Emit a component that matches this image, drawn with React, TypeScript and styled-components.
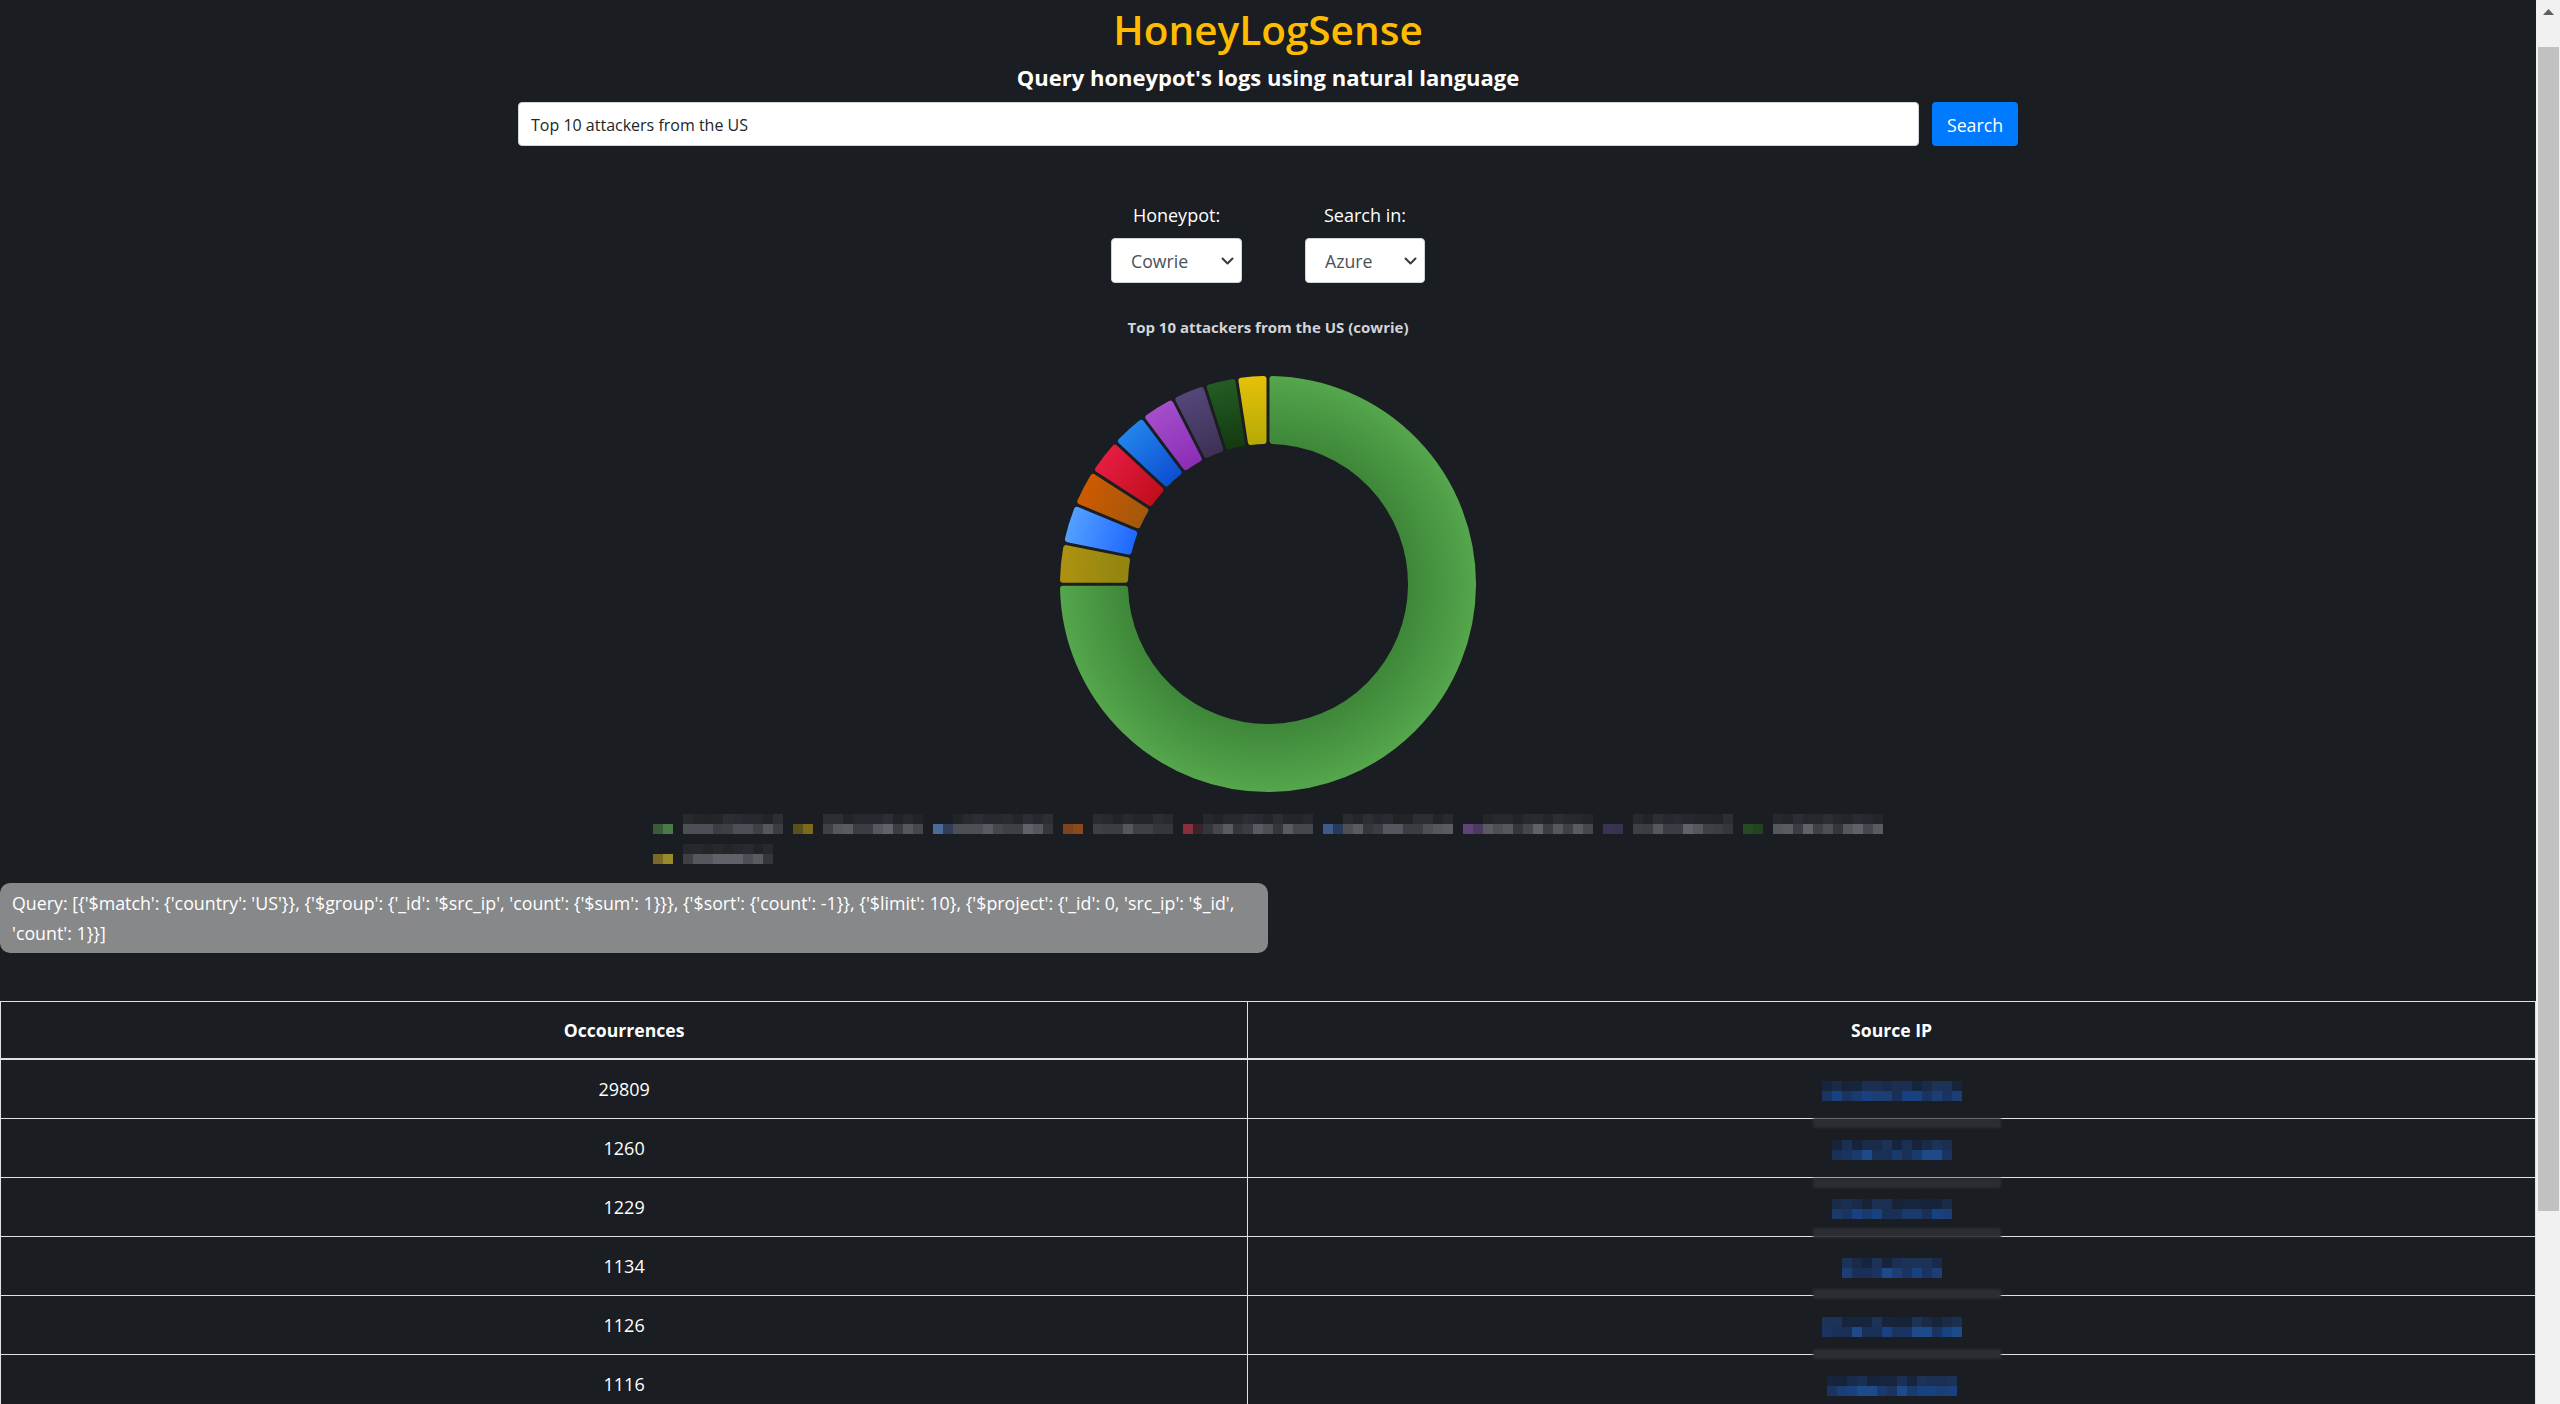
import React from 'react';
import styled, { createGlobalStyle } from 'styled-components';

const GlobalStyle = createGlobalStyle`
  html, body { background: #1a1d21; }
  html { scrollbar-width: none; }
  ::-webkit-scrollbar { display: none; }
  body {
    margin: 0;
    font-family: "Open Sans", "Noto Sans", sans-serif;
    color: #fff;
  }
`;

/* ---------- shell & window scrollbar ---------- */

const Shell = styled.div`
  display: flex;
  align-items: flex-start;
`;

const Page = styled.main`
  flex: 1;
  min-width: 0;
`;

const ScrollRail = styled.div`
  position: sticky;
  top: 0;
  flex: 0 0 24px;
  height: 100vh;
  display: flex;
  flex-direction: column;
  background: #f1f1f1;
`;

const RailArrow = styled.div`
  height: 24px;
  display: flex;
  align-items: center;
  justify-content: center;
`;

const RailThumb = styled.div`
  margin: 23px 1px 0 2px;
  height: 1164px;
  background: #c1c1c1;
`;

/* ---------- header & search ---------- */

const Header = styled.header`
  text-align: center;
  padding-top: 5px;
`;

const Title = styled.h1`
  margin: 0;
  font-size: 40.5px;
  line-height: 50px;
  font-weight: 600;
  color: #ffbb00;
`;

const Subtitle = styled.h2`
  margin: 9px 0 0;
  font-size: 22px;
  line-height: 26px;
  font-weight: 700;
  color: #fff;
`;

const SearchForm = styled.form`
  display: flex;
  gap: 13px;
  width: 1500px;
  margin: 12px auto 0;
`;

const QueryInput = styled.input`
  flex: 1;
  height: 44px;
  box-sizing: border-box;
  border: 1px solid #ced4da;
  border-radius: 4px;
  padding: 2px 12px 0;
  font: 16px "Open Sans", sans-serif;
  color: #212529;
  background: #fff;
  outline: none;
`;

const SearchButton = styled.button`
  width: 86px;
  height: 44px;
  border: none;
  border-radius: 4px;
  padding: 2px 0 0;
  background: #007bff;
  color: #fff;
  font: 17.7px "Open Sans", sans-serif;
  cursor: pointer;
`;

/* ---------- filters ---------- */

const Filters = styled.div`
  display: flex;
  justify-content: center;
  gap: 63px;
  margin-top: 57px;
`;

const Field = styled.div`
  display: flex;
  flex-direction: column;
  align-items: center;
  gap: 11px;
`;

const FieldLabel = styled.label`
  font-size: 18px;
  line-height: 24px;
  color: #fff;
`;

const SelectBox = styled.div<{ $w: number }>`
  position: relative;
  width: ${p => p.$w}px;
  height: 45px;
`;

const Select = styled.select`
  appearance: none;
  width: 100%;
  height: 100%;
  box-sizing: border-box;
  border: 1px solid #ced4da;
  border-radius: 4px;
  background: #fff;
  padding: 1px 0 0 19px;
  font: 17.7px "Open Sans", sans-serif;
  color: #495057;
  outline: none;
`;

const Chevron = styled.svg`
  position: absolute;
  right: 8px;
  top: 50%;
  width: 13px;
  height: 8px;
  margin-top: -4px;
  pointer-events: none;
`;

/* ---------- chart ---------- */

const ChartSection = styled.section`
  display: flex;
  flex-direction: column;
  align-items: center;
`;

const ChartTitle = styled.h3`
  margin: 34px 0 0;
  font-size: 15px;
  line-height: 20px;
  font-weight: 700;
  color: #d3d4d9;
`;

const Donut = styled.svg`
  display: block;
  margin-top: 26.5px;
  width: 440px;
  height: 440px;
`;

const Legend = styled.ul`
  list-style: none;
  margin: 10.5px 0 0;
  padding: 0;
  width: 1230px;
  display: flex;
  flex-wrap: wrap;
  gap: 10px;
`;

const LegendItem = styled.li<{ $gap: number }>`
  display: flex;
  align-items: flex-end;
  gap: ${p => p.$gap}px;
`;

const Mosaic = styled.span<{ $cols: number }>`
  display: grid;
  grid-template-columns: repeat(${p => p.$cols}, 10px);
  grid-auto-rows: 10px;
`;

const IpMosaic = styled(Mosaic)`
  display: inline-grid;
  vertical-align: middle;
`;

const Tile = styled.span<{ $c: string }>`
  background: ${p => p.$c};
`;

/* ---------- query ---------- */

const QueryBox = styled.div`
  width: 50%;
  box-sizing: border-box;
  margin-top: 19px;
  padding: 5px 12px;
  background: #87888a;
  border-radius: 10px;
  font-size: 17.8px;
  line-height: 30px;
  color: #fff;
`;

/* ---------- table ---------- */

const ResultTable = styled.table`
  width: 100%;
  border-collapse: collapse;
  margin-top: 48px;
  color: #fff;
`;

const Col = styled.col<{ $w: string }>`
  width: ${p => p.$w};
`;

const Th = styled.th`
  border: 1px solid #dee2e6;
  border-bottom-width: 2px;
  padding: 14px 15px;
  line-height: 28px;
  font-size: 17.6px;
  font-weight: 700;
  text-align: center;
`;

const Td = styled.td`
  position: relative;
  border: 1px solid #dee2e6;
  padding: 15px;
  line-height: 28px;
  font-size: 18px;
  text-align: center;
`;

const RedactBar = styled.span<{ $top: number }>`
  position: absolute;
  z-index: 2;
  top: ${p => p.$top}px;
  left: calc(50% - 79px);
  width: 188px;
  height: 10px;
  background: #2b2d31;
  filter: blur(1px);
`;

/* ---------- data ---------- */

const rnd = (n: number) => {
  const x = Math.sin(n * 127.1 + 311.7) * 43758.5453;
  return x - Math.floor(x);
};

const mosaic = (seed: number, cols: number, top: string[], bottom: string[]) => {
  const out: string[] = [];
  for (let i = 0; i < cols; i++) out.push(top[Math.floor(rnd(seed * 100 + i) * top.length)]);
  for (let i = 0; i < cols; i++) out.push(bottom[Math.floor(rnd(seed * 100 + 50 + i) * bottom.length)]);
  return out;
};

const GRAY_TOP = ['#232529', '#26282d', '#292b30', '#2c2e33', '#212327', '#27292e'];
const GRAY_BOTTOM = ['#3b3d45', '#45474e', '#4d4e56', '#56575e', '#606169', '#3f4046', '#34363c', '#5a5a62'];
const BLUE_TOP = ['#172339', '#1a2b4a', '#1c3357', '#16243e', '#1b2f52'];
const BLUE_BOTTOM = ['#1a3361', '#1d3d75', '#17417f', '#1a2f56', '#1e4a8a', '#1b3a6c'];

const rows = [29809, 1260, 1229, 1134, 1126, 1116, 1080, 1040, 1000, 960];

const segments = [
  { inner: '#3e8739', outer: '#55a64c' },
  { inner: '#918410', outer: '#ad9210' },
  { inner: '#1f68ff', outer: '#53a0ff' },
  { inner: '#a3580c', outer: '#cc5a00' },
  { inner: '#c00e1c', outer: '#e61c42' },
  { inner: '#0c4fd2', outer: '#2384ea' },
  { inner: '#8c2db6', outer: '#a44ecb' },
  { inner: '#3d3155', outer: '#544679' },
  { inner: '#143a10', outer: '#245c24' },
  { inner: '#b6aa05', outer: '#e4c10a' },
];

const legendItems = [
  { box: ['#3b5a3a', '#4a7a47'], gap: 10, cols: 10 },
  { box: ['#5b4f1c', '#7b6a1a'], gap: 10, cols: 10 },
  { box: ['#4b6a99', '#2f3d58'], gap: 0, cols: 10 },
  { box: ['#7d431a', '#8a4a1c'], gap: 10, cols: 8 },
  { box: ['#8a2f3a', '#3a2329'], gap: 0, cols: 11 },
  { box: ['#3d5a8a', '#283a5a'], gap: 0, cols: 11 },
  { box: ['#5e4479', '#4a3a60'], gap: 0, cols: 11 },
  { box: ['#3a3353', '#383150'], gap: 10, cols: 10 },
  { box: ['#264a24', '#23421f'], gap: 10, cols: 11 },
  { box: ['#7a6a24', '#9a8a2a'], gap: 10, cols: 9 },
];

const ipCols = [14, 12, 12, 10, 14, 13, 12, 13, 12, 14];
const barTops = [58, 59, 50, 52, 53, 54, 52, 55, 53, 40];

const CX = 220;
const CY = 220;
const R_OUT = 208;
const R_IN = 140;
const CORNER = 3;
const GAP = 3;

function sectorPath(a0: number, a1: number) {
  const ro = R_OUT - CORNER;
  const ri = R_IN + CORNER;
  const d = GAP / 2 + CORNER;
  const pt = (r: number, a: number) => `${(CX + r * Math.sin(a)).toFixed(3)} ${(CY - r * Math.cos(a)).toFixed(3)}`;
  const oa0 = a0 + Math.asin(d / ro);
  const oa1 = a1 - Math.asin(d / ro);
  const ia0 = a0 + Math.asin(d / ri);
  const ia1 = a1 - Math.asin(d / ri);
  const lo = oa1 - oa0 > Math.PI ? 1 : 0;
  const li = ia1 - ia0 > Math.PI ? 1 : 0;
  return `M${pt(ro, oa0)} A${ro} ${ro} 0 ${lo} 1 ${pt(ro, oa1)} L${pt(ri, ia1)} A${ri} ${ri} 0 ${li} 0 ${pt(ri, ia0)} Z`;
}

function DonutChart() {
  const total = rows.reduce((a, b) => a + b, 0);
  let acc = 0;
  const arcs = rows.map((v, i) => {
    const a0 = (acc / total) * Math.PI * 2;
    acc += v;
    const a1 = (acc / total) * Math.PI * 2;
    return { d: sectorPath(a0, a1), i };
  });
  return (
    <Donut viewBox="0 0 440 440">
      <defs>
        {segments.map((s, i) => (
          <radialGradient key={i} id={`seg${i}`} gradientUnits="userSpaceOnUse" cx={CX} cy={CY} r={R_OUT}>
            <stop offset={R_IN / R_OUT} stopColor={s.inner} />
            <stop offset="1" stopColor={s.outer} />
          </radialGradient>
        ))}
      </defs>
      {arcs.map(({ d, i }) => (
        <path
          key={i}
          d={d}
          fill={`url(#seg${i})`}
          stroke={`url(#seg${i})`}
          strokeWidth={CORNER * 2}
          strokeLinejoin="round"
        />
      ))}
    </Donut>
  );
}

function Pixelated({ seed, cols, top, bottom, as }: { seed: number; cols: number; top: string[]; bottom: string[]; as?: 'ip' }) {
  const tiles = mosaic(seed, cols, top, bottom);
  const Grid = as === 'ip' ? IpMosaic : Mosaic;
  return (
    <Grid $cols={cols} aria-hidden>
      {tiles.map((c, i) => (
        <Tile key={i} $c={c} />
      ))}
    </Grid>
  );
}

const ChevronIcon = () => (
  <Chevron viewBox="0 0 13 8">
    <polyline points="1.5,1.5 6.5,6.5 11.5,1.5" fill="none" stroke="#343a40" strokeWidth="2" strokeLinecap="round" strokeLinejoin="round" />
  </Chevron>
);

export default function App() {
  return (
    <>
      <GlobalStyle />
      <Shell>
        <Page>
          <Header>
            <Title>HoneyLogSense</Title>
            <Subtitle>Query honeypot's logs using natural language</Subtitle>
          </Header>

          <SearchForm onSubmit={e => e.preventDefault()}>
            <QueryInput type="text" defaultValue="Top 10 attackers from the US" />
            <SearchButton type="submit">Search</SearchButton>
          </SearchForm>

          <Filters>
            <Field>
              <FieldLabel htmlFor="honeypot">Honeypot:</FieldLabel>
              <SelectBox $w={131}>
                <Select id="honeypot" defaultValue="cowrie">
                  <option value="cowrie">Cowrie</option>
                  <option value="dionaea">Dionaea</option>
                </Select>
                <ChevronIcon />
              </SelectBox>
            </Field>
            <Field>
              <FieldLabel htmlFor="source">Search in:</FieldLabel>
              <SelectBox $w={120}>
                <Select id="source" defaultValue="azure">
                  <option value="azure">Azure</option>
                  <option value="local">Local</option>
                </Select>
                <ChevronIcon />
              </SelectBox>
            </Field>
          </Filters>

          <ChartSection>
            <ChartTitle>Top 10 attackers from the US (cowrie)</ChartTitle>
            <DonutChart />
            <Legend>
              {legendItems.map((item, i) => (
                <LegendItem key={i} $gap={item.gap}>
                  <Mosaic $cols={2}>
                    <Tile $c={item.box[0]} />
                    <Tile $c={item.box[1]} />
                  </Mosaic>
                  <Pixelated seed={i + 1} cols={item.cols} top={GRAY_TOP} bottom={GRAY_BOTTOM} />
                </LegendItem>
              ))}
            </Legend>
          </ChartSection>

          <QueryBox>
            Query: [{"{"}'$match': {"{"}'country': 'US'{"}}"}, {"{"}'$group': {"{"}'_id': '$src_ip', 'count': {"{"}'$sum': 1{"}}}"}, {"{"}'$sort': {"{"}'count': -1{"}}"}, {"{"}'$limit': 10{"}"}, {"{"}'$project': {"{"}'_id': 0, 'src_ip': '$_id', 'count': 1{"}}"}]
          </QueryBox>

          <ResultTable>
            <colgroup>
              <Col $w="49.2%" />
              <Col $w="50.8%" />
            </colgroup>
            <thead>
              <tr>
                <Th>Occourrences</Th>
                <Th>Source IP</Th>
              </tr>
            </thead>
            <tbody>
              {rows.map((n, i) => (
                <tr key={i}>
                  <Td>{n}</Td>
                  <Td>
                    <Pixelated seed={40 + i} cols={ipCols[i]} top={BLUE_TOP} bottom={BLUE_BOTTOM} as="ip" />
                    <RedactBar $top={barTops[i]} />
                  </Td>
                </tr>
              ))}
            </tbody>
          </ResultTable>
        </Page>

        <ScrollRail aria-hidden>
          <RailArrow>
            <svg width="11" height="6" viewBox="0 0 11 6">
              <polygon points="5.5,0 11,6 0,6" fill="#606060" />
            </svg>
          </RailArrow>
          <RailThumb />
        </ScrollRail>
      </Shell>
    </>
  );
}
